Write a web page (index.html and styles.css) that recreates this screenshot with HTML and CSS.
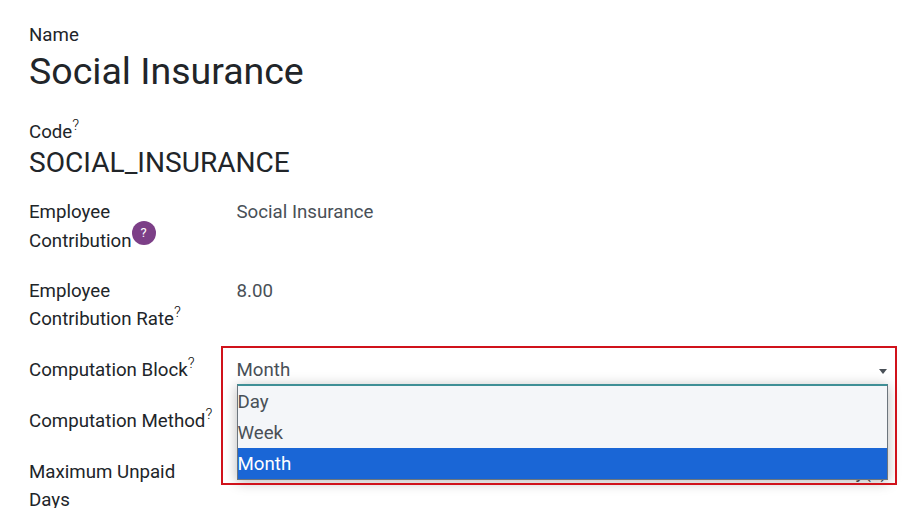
FILE: index.html
```html
<!DOCTYPE html>
<html lang="en">
<head>
  <meta charset="UTF-8" />
  <title>Social Insurance</title>
  <link rel="stylesheet" href="styles.css">
</head>
<body>
  <div class="sheet">
    <div class="big-field">
      <div class="big-label">Name</div>
      <div class="title">Social Insurance</div>
    </div>
    <div class="code-field">
      <div class="big-label">Code<sup>?</sup></div>
      <div class="code">SOCIAL_INSURANCE</div>
    </div>

    <div class="row row-first">
      <div class="label">Employee Contribution<span class="help-badge">?</span></div>
      <div class="value">Social Insurance</div>
    </div>
    <div class="row row-rate">
      <div class="label">Employee Contribution Rate<sup>?</sup></div>
      <div class="value">8.00</div>
    </div>
    <div class="row row-block">
      <div class="label">Computation Block<sup>?</sup></div>
      <div class="value select-value">
        Month
        <span class="caret"></span>
        <ul class="options">
          <li>Day</li>
          <li>Week</li>
          <li class="selected">Month</li>
        </ul>
      </div>
    </div>
    <div class="row row-method">
      <div class="label">Computation Method<sup>?</sup></div>
      <div class="value"></div>
    </div>
    <div class="row row-unpaid">
      <div class="label">Maximum Unpaid Days</div>
      <div class="value unit">Day(s)</div>
    </div>
  </div>
  <div class="highlight"></div>
</body>
</html>
```

FILE: styles.css
```css
html, body {
  margin: 0;
  height: 508px;
  overflow: hidden;
  background: #fff;
}

body {
  font-family: Roboto, "Noto Sans", sans-serif;
  font-size: 18.7px;
  color: #212529;
  position: relative;
}

.sheet {
  padding: 22px 10px 0 29px;
}

.big-label {
  line-height: 27px;
}

.title {
  font-size: 37.5px;
  line-height: 46px;
  margin-top: -1px;
}

.code-field {
  margin-top: 25px;
}

.code {
  font-size: 28.1px;
  line-height: 36px;
  margin-top: -1px;
}

sup {
  font-size: 15px;
  font-weight: 300;
  color: #111;
  line-height: 0;
  vertical-align: 8px;
}

.row {
  display: grid;
  grid-template-columns: 207.5px 1fr;
  line-height: 28px;
}

.row-first { margin-top: 17px; line-height: 29px; }
.row-rate { margin-top: 21px; }
.row-block { margin-top: 23px; }
.row-method { margin-top: 23px; }
.row-unpaid { margin-top: 23px; }

.label {
  width: 170px;
}

.row-block .label,
.row-method .label {
  width: 190px;
  white-space: nowrap;
}

.value {
  color: #495057;
}

.help-badge {
  display: inline-block;
  width: 24px;
  height: 24px;
  margin: -10px 0;
  border-radius: 50%;
  background: #7c3f87;
  color: #fff;
  font-size: 13px;
  line-height: 24px;
  text-align: center;
  vertical-align: 10px;
}

.select-value {
  position: relative;
}

.caret {
  position: absolute;
  right: 10px;
  top: 13px;
  border-left: 4.5px solid transparent;
  border-right: 4.5px solid transparent;
  border-top: 5px solid #495057;
}

.options {
  position: absolute;
  left: 0;
  right: 9px;
  top: 28px;
  margin: 0;
  padding: 0;
  list-style: none;
  background: #f4f6f9;
  border: 1px solid #6c757d;
  border-top: 2px solid #3f8f96;
  box-shadow: 0 2px 12px rgba(0, 0, 0, 0.28);
  z-index: 2;
}

.options li {
  height: 31px;
  line-height: 33px;
}

.options .selected {
  background: #1a66d6;
  color: #fff;
}

.unit {
  text-align: right;
  padding-right: 10px;
}

.highlight {
  position: absolute;
  left: 221px;
  top: 346px;
  width: 672px;
  height: 135px;
  border: 2px solid #d0121b;
  z-index: 3;
  pointer-events: none;
}
```
